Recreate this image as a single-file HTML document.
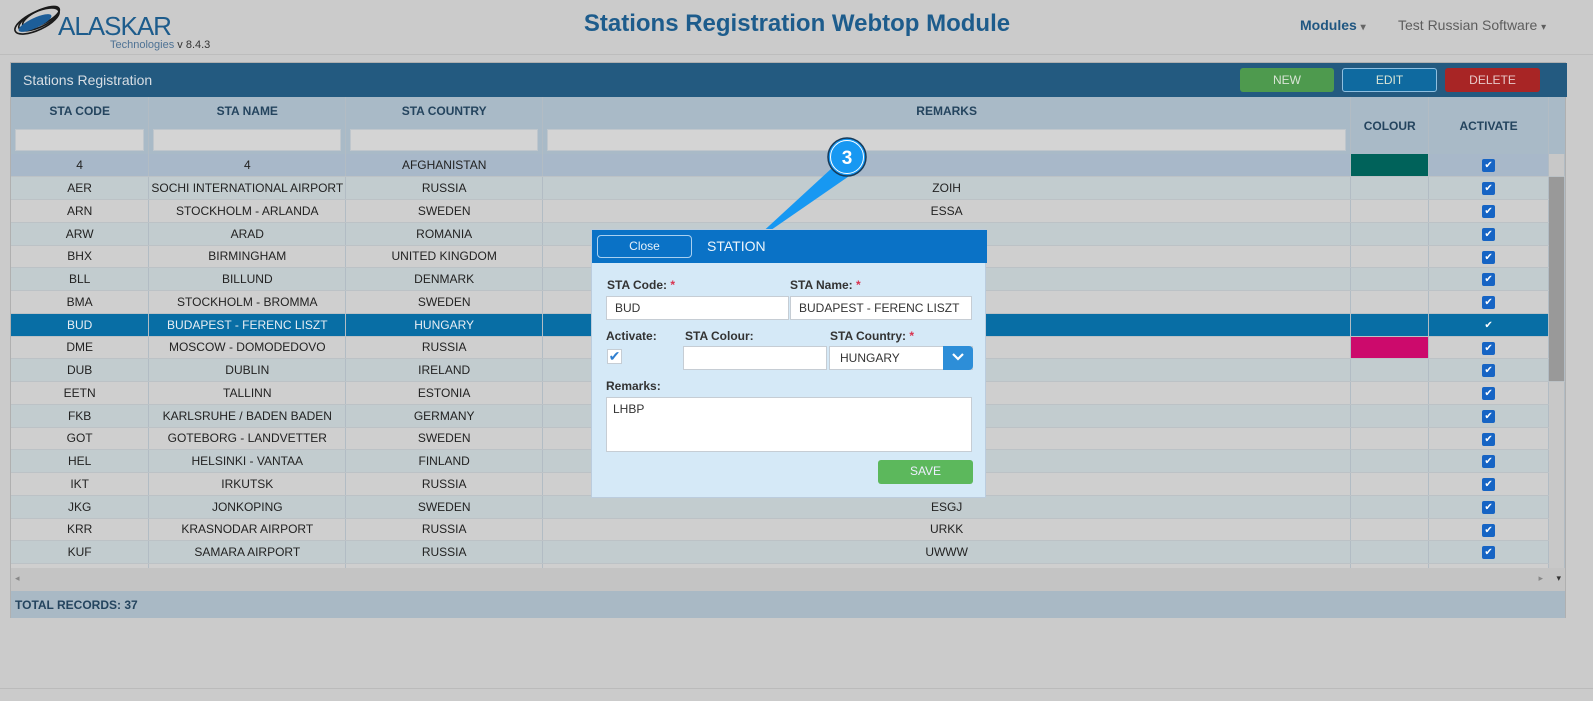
<!DOCTYPE html>
<html><head><meta charset="utf-8"><style>
*{box-sizing:border-box;margin:0;padding:0}
body{width:1593px;height:701px;background:#cbcbcb;font-family:"Liberation Sans",sans-serif;position:relative;overflow:hidden}
.hdr{position:absolute;left:0;top:0;width:1593px;height:55px;border-bottom:1px solid #bdbdbd;background:#cbcbcb}
.title{position:absolute;left:0;width:1700px;top:10px;text-align:center;font-size:24px;font-weight:bold;color:#1d5c8c}
.abs{position:absolute}
.panel{position:absolute;left:10px;top:62px;width:1556px;height:556px;background:#c8c8c8;border:1px solid #b0b0b0}
.pt{position:absolute;left:0;top:0;width:1556px;height:34px;background:#235a80;color:#d8dee4;font-size:14px;padding:9px 12px}
.btn{position:absolute;top:5px;height:24px;border-radius:3px;font-size:12px;text-align:center;line-height:22px;color:#d9e5d6}
table{position:absolute;left:0;top:34px;border-collapse:collapse;table-layout:fixed}
td,th{border-right:1px solid #b2bcc4;font-size:12px;text-align:center;overflow:hidden;white-space:nowrap;color:#222}
th{background:#a9bac7;color:#24445e;font-weight:bold;height:28px}
.f td{background:#a9bac7;height:29px;padding:0 4px}
.f div{background:#d4d4d4;height:22px;border:1px solid #bfc6cc}
.r td{height:22.75px;border-bottom:1px solid #bcc2c6}
.a td{background:#cfcfcf}.b td{background:#c2cccf}
.s td{background:#086ea5;color:#e8eef4}
.h td{background:#a8b8c9}
.cb{display:inline-block;width:13px;height:13px;background:#1664c4;border-radius:2px;color:#fff;font-size:10px;line-height:13px;vertical-align:middle}
.lbl{position:absolute;font-size:12px;font-weight:bold;color:#333;white-space:nowrap}
.lbl i{color:#d9334f;font-style:normal}
.inp{position:absolute;background:#fff;border:1px solid #c6cdd4;font-size:12px;color:#333;padding:0 8px;line-height:22px;white-space:nowrap;overflow:hidden}
</style></head><body>
<div class="hdr">
<svg class="abs" style="left:10px;top:4px" width="60" height="34" viewBox="0 0 60 34">
<g fill="none" stroke="#1a1a1a" stroke-width="1.6"><ellipse cx="27" cy="17" rx="24" ry="9" transform="rotate(-25 27 17)"/><ellipse cx="29" cy="15" rx="22" ry="8" transform="rotate(-25 29 15)"/><ellipse cx="31" cy="13" rx="20" ry="7" transform="rotate(-25 31 13)"/></g>
<ellipse cx="25" cy="19" rx="18" ry="5" transform="rotate(-25 25 19)" fill="#1d5e99"/></svg>
<div class="abs" style="left:58px;top:11px;font-size:26px;color:#1d5c8c;letter-spacing:-1px">ALASKAR</div>
<div class="abs" style="left:110px;top:39px;font-size:11px;color:#4e7294">Technologies <span style="color:#333">v 8.4.3</span></div>
<div class="title" style="left:-53px">Stations Registration Webtop Module</div>
<div class="abs" style="left:1300px;top:17px;font-size:14px;font-weight:bold;color:#1f5681">Modules <span style="color:#666;font-size:10px">▾</span></div>
<div class="abs" style="left:1398px;top:17px;font-size:14px;color:#5d5d5d">Test Russian Software <span style="font-size:10px">▾</span></div>
</div>
<div class="panel">
<div class="pt">Stations Registration</div>
<div class="btn" style="left:1229px;width:94px;background:#4e9a4e;line-height:24px">NEW</div>
<div class="btn" style="left:1331px;width:95px;background:#0f6aa0;border:1px solid #8fbfe0">EDIT</div>
<div class="btn" style="left:1434px;width:95px;background:#a82525;color:#e7c9c9;line-height:24px">DELETE</div>
<table>
<colgroup><col style="width:138px"><col style="width:197px"><col style="width:197px"><col style="width:810px"><col style="width:78px"><col style="width:120px"><col style="width:16px"></colgroup>
<tr><th>STA CODE</th><th>STA NAME</th><th>STA COUNTRY</th><th>REMARKS</th><th rowspan="2" style="height:57px">COLOUR</th><th rowspan="2">ACTIVATE</th><th rowspan="2" style="border:0"></th></tr>
<tr class="f"><td><div></div></td><td><div></div></td><td><div></div></td><td><div></div></td></tr>
<tr class="r h"><td>4</td><td>4</td><td>AFGHANISTAN</td><td></td><td style="background:#00625a"></td><td><span class="cb">✔</span></td><td style="background:#c8c8c8"></td></tr>
<tr class="r b"><td>AER</td><td>SOCHI INTERNATIONAL AIRPORT</td><td>RUSSIA</td><td>ZOIH</td><td></td><td><span class="cb">✔</span></td><td style="background:#999" rowspan="9"></td></tr>
<tr class="r a"><td>ARN</td><td>STOCKHOLM - ARLANDA</td><td>SWEDEN</td><td>ESSA</td><td></td><td><span class="cb">✔</span></td></tr>
<tr class="r b"><td>ARW</td><td>ARAD</td><td>ROMANIA</td><td>LRAR</td><td></td><td><span class="cb">✔</span></td></tr>
<tr class="r a"><td>BHX</td><td>BIRMINGHAM</td><td>UNITED KINGDOM</td><td>EGBB</td><td></td><td><span class="cb">✔</span></td></tr>
<tr class="r b"><td>BLL</td><td>BILLUND</td><td>DENMARK</td><td>EKBI</td><td></td><td><span class="cb">✔</span></td></tr>
<tr class="r a"><td>BMA</td><td>STOCKHOLM - BROMMA</td><td>SWEDEN</td><td>ESSB</td><td></td><td><span class="cb">✔</span></td></tr>
<tr class="r s"><td>BUD</td><td>BUDAPEST - FERENC LISZT</td><td>HUNGARY</td><td>LHBP</td><td></td><td><span class="cb" style="background:none">✔</span></td></tr>
<tr class="r a"><td>DME</td><td>MOSCOW - DOMODEDOVO</td><td>RUSSIA</td><td>UUDD</td><td style="background:#cc0a6c"></td><td><span class="cb">✔</span></td></tr>
<tr class="r b"><td>DUB</td><td>DUBLIN</td><td>IRELAND</td><td>EIDW</td><td></td><td><span class="cb">✔</span></td></tr>
<tr class="r a"><td>EETN</td><td>TALLINN</td><td>ESTONIA</td><td>EETN</td><td></td><td><span class="cb">✔</span></td><td style="background:#c8c8c8" rowspan="9"></td></tr>
<tr class="r b"><td>FKB</td><td>KARLSRUHE / BADEN BADEN</td><td>GERMANY</td><td>EDSB</td><td></td><td><span class="cb">✔</span></td></tr>
<tr class="r a"><td>GOT</td><td>GOTEBORG - LANDVETTER</td><td>SWEDEN</td><td>ESGG</td><td></td><td><span class="cb">✔</span></td></tr>
<tr class="r b"><td>HEL</td><td>HELSINKI - VANTAA</td><td>FINLAND</td><td>EFHK</td><td></td><td><span class="cb">✔</span></td></tr>
<tr class="r a"><td>IKT</td><td>IRKUTSK</td><td>RUSSIA</td><td>UIII</td><td></td><td><span class="cb">✔</span></td></tr>
<tr class="r b"><td>JKG</td><td>JONKOPING</td><td>SWEDEN</td><td>ESGJ</td><td></td><td><span class="cb">✔</span></td></tr>
<tr class="r a"><td>KRR</td><td>KRASNODAR AIRPORT</td><td>RUSSIA</td><td>URKK</td><td></td><td><span class="cb">✔</span></td></tr>
<tr class="r b"><td>KUF</td><td>SAMARA AIRPORT</td><td>RUSSIA</td><td>UWWW</td><td></td><td><span class="cb">✔</span></td></tr>
<tr class="r a"><td>KZN</td><td>KZN AIRPORT</td><td>RUSSIA</td><td>PREVEDMEDVED</td><td></td><td><span class="cb">✔</span></td></tr>
</table>
<div class="abs" style="left:0;top:505px;width:1554px;height:23px;background:#c4c4c4;font-size:9px;color:#888;padding:5px 4px">◂<span style="position:absolute;right:22px">▸</span><span style="position:absolute;right:4px;color:#333">▾</span></div>
<div class="abs" style="left:0;top:528px;width:1554px;height:27px;background:#a9b9c5;color:#24445e;font-size:12px;font-weight:bold;padding:7px 4px">TOTAL RECORDS: 37</div>
</div>
<div class="abs" style="left:0;top:688px;width:1593px;height:1px;background:#bbb"></div>

<svg class="abs" style="left:0;top:0" width="1593" height="701">
<polygon points="745,248 832,168 855,172" fill="#1798f2"/>
<circle cx="847" cy="157" r="19" fill="#1798f2" stroke="#163a5a" stroke-width="1.5"/>
<circle cx="847" cy="157" r="16.5" fill="none" stroke="#fff" stroke-width="1"/>
<text x="847" y="164" text-anchor="middle" font-family="Liberation Sans" font-weight="bold" font-size="19" fill="#fff">3</text>
</svg>

<div class="abs" style="left:591px;top:229px;width:395px;height:269px;background:#d5e9f7;border:1px solid #bcd">
<div class="abs" style="left:0;top:0;width:395px;height:33px;background:#0a72c6"></div>
<div class="abs" style="left:5px;top:5px;width:95px;height:23px;border:1px solid #a9d0f0;border-radius:4px;color:#e6f1fa;font-size:12px;text-align:center;line-height:21px">Close</div>
<div class="abs" style="left:115px;top:8px;color:#eef5fb;font-size:14px">STATION</div>
<div class="lbl" style="left:15px;top:48px">STA Code: <i>*</i></div>
<div class="lbl" style="left:198px;top:48px">STA Name: <i>*</i></div>
<div class="inp" style="left:14px;top:66px;width:183px;height:24px">BUD</div>
<div class="inp" style="left:198px;top:66px;width:182px;height:24px">BUDAPEST - FERENC LISZT</div>
<div class="lbl" style="left:14px;top:99px">Activate:</div>
<div class="lbl" style="left:93px;top:99px">STA Colour:</div>
<div class="lbl" style="left:238px;top:99px">STA Country: <i>*</i></div>
<div class="abs" style="left:15px;top:119px;width:15px;height:15px;background:#fff;border:1px solid #c6cdd4;color:#2f7fd0;font-size:14px;line-height:13px;text-align:center">✔</div>
<div class="inp" style="left:91px;top:116px;width:144px;height:24px"></div>
<div class="inp" style="left:237px;top:116px;width:144px;height:24px;padding-left:10px">HUNGARY</div>
<div class="abs" style="left:351px;top:116px;width:30px;height:24px;background:#2d8ed8;border-radius:0 4px 4px 0;color:#fff;text-align:center;font-size:13px;line-height:22px"><svg width="12" height="8" viewBox="0 0 12 8"><path d="M1 1 L6 6 L11 1" fill="none" stroke="#fff" stroke-width="2.2"/></svg></div>
<div class="lbl" style="left:14px;top:149px">Remarks:</div>
<div class="inp" style="left:14px;top:167px;width:366px;height:55px;padding:4px 6px;line-height:14px">LHBP</div>
<div class="abs" style="left:286px;top:230px;width:95px;height:24px;background:#5cb85c;border-radius:3px;color:#eef;font-size:12px;text-align:center;line-height:22px">SAVE</div>
</div>
</body></html>
